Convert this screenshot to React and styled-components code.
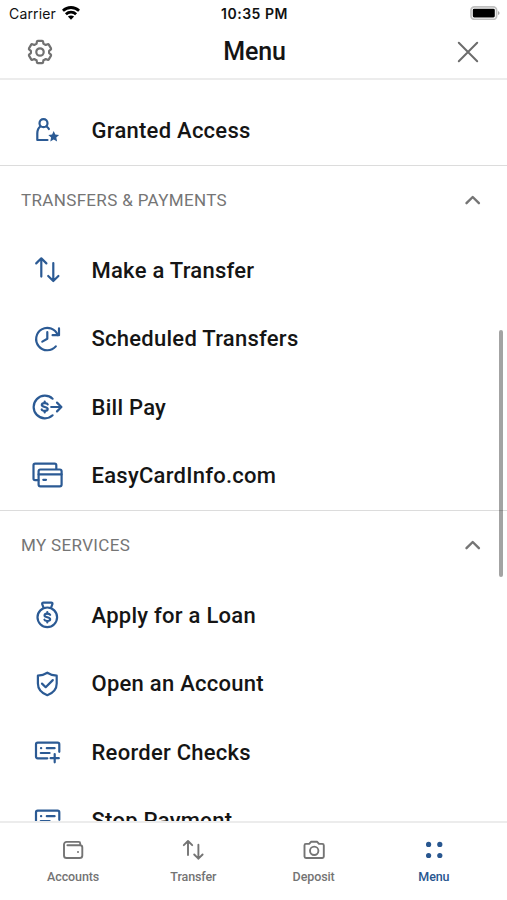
import React from "react";
import styled, { createGlobalStyle } from "styled-components";

const GlobalStyle = createGlobalStyle`
  * {
    box-sizing: border-box;
  }
  body {
    margin: 0;
    background: #fff;
    font-family: Roboto, "Liberation Sans", sans-serif;
  }
`;

const Screen = styled.div`
  display: flex;
  flex-direction: column;
  position: relative;
  width: 507px;
  height: 900px;
  overflow: hidden;
  background: #fff;
`;

const StatusBar = styled.div`
  display: grid;
  grid-template-columns: 1fr auto 1fr;
  align-items: center;
  height: 26px;
  padding: 0 7px 0 9px;
  font-family: Inter, sans-serif;
  font-size: 14px;
  color: #111;
`;

const Carrier = styled.div`
  display: flex;
  align-items: center;
  gap: 6px;
  letter-spacing: 0.15px;
`;

const Clock = styled.div`
  font-weight: 600;
  letter-spacing: 0.5px;
`;

const Battery = styled.div`
  display: flex;
  justify-content: flex-end;
`;

const Header = styled.header`
  display: flex;
  align-items: center;
  justify-content: space-between;
  height: 54px;
  padding: 0 26px 1px;
  border-bottom: 2px solid #ececec;
`;

const Title = styled.h1`
  margin: 0;
  font-size: 25px;
  font-weight: 500;
  letter-spacing: -0.2px;
  color: #141414;
`;

const IconButton = styled.button`
  display: flex;
  padding: 0;
  border: 0;
  background: none;
`;

const Icon = styled.svg`
  display: block;
  flex: none;
  width: ${props => props.$size}px;
  height: ${props => props.$size}px;
  fill: none;
  stroke: ${props => props.$color || "currentColor"};
  stroke-width: ${props => props.$stroke || 2.2};
  stroke-linecap: round;
  stroke-linejoin: round;
  .solid {
    fill: currentColor;
    stroke: none;
  }
`;

const List = styled.main`
  flex: 1;
  min-height: 0;
  padding-top: 16.3px;
  overflow: hidden;
`;

const Section = styled.section`
  border-top: 1px solid #dcdcdc;
`;

const SectionHeader = styled.div`
  display: flex;
  align-items: center;
  justify-content: space-between;
  height: 70.4px;
  padding: 0 24px 1.4px 21px;
  font-size: 17px;
  letter-spacing: 0.34px;
  color: #757575;
`;

const Row = styled.div`
  display: flex;
  align-items: center;
  gap: 28.5px;
  height: 68.4px;
  padding-left: 31px;
  color: #2b5a94;
`;

const Label = styled.span`
  font-size: 22px;
  font-weight: 500;
  letter-spacing: 0.26px;
  color: #151515;
`;

const ScrollThumb = styled.div`
  position: absolute;
  top: 330px;
  right: 4px;
  width: 4px;
  height: 247px;
  border-radius: 2px;
  background: rgba(0, 0, 0, 0.36);
`;

const TabBar = styled.nav`
  display: grid;
  grid-template-columns: repeat(4, 1fr);
  height: 79px;
  padding: 15px 13px 0;
  border-top: 2px solid #ececec;
  background: #fff;
`;

const Tab = styled.div`
  display: flex;
  flex-direction: column;
  align-items: center;
  gap: 7px;
  font-size: 12.5px;
  line-height: 16px;
  font-weight: 500;
  letter-spacing: -0.1px;
  color: ${props => (props.$active ? "#28568f" : "#747474")};
`;

const dollar = (
  <>
    <path d="M3 -2.6C2.4 -4.1 -2.9 -4.5 -2.9 -1.9C-2.9 0.4 3 -0.4 3 2C3 4.5 -2.5 4.1 -3 2.5" />
    <path d="M0 -5.4V-4M0 4V5.4" />
  </>
);

const icons = {
  access: (
    <>
      <circle cx="12.5" cy="9.2" r="4" />
      <path d="M9.5 12.4C7.2 14 6.3 16.6 6.3 19.5V26H16.5M15.4 12.4C16.6 13.2 17.4 14 17.9 15" />
      <path
        className="solid"
        d="M22.7 17.1L24.3 20.6L28.1 21L25.3 23.6L26.1 27.4L22.7 25.5L19.3 27.4L20.1 23.6L17.3 21L21.1 20.6Z"
      />
    </>
  ),
  transfer: <path d="M10.3 22.6V4.8M5.2 9.4L10.3 4.3L15.4 9.4M22.3 9V26.8M17.2 22L22.3 27L27.4 22" />,
  scheduled: (
    <>
      <path d="M24.8 23.4A11.2 11.2 0 1 1 26.8 12" />
      <path d="M28 5.4V12.2H21.6M16.3 9.2V15.7L11.3 18.6" />
    </>
  ),
  billPay: (
    <>
      <path d="M21.6 7.7A11.3 11.3 0 1 0 21.6 24.3" />
      <path d="M20.2 16H30.2M26 11.6L30.4 16L26 20.4" />
      <g transform="translate(13.7 16)">{dollar}</g>
    </>
  ),
  cards: (
    <>
      <path d="M25.3 10V6.2Q25.3 4.6 23.7 4.6H4.1Q2.5 4.6 2.5 6.2V19.6Q2.5 21.2 4.1 21.2H7.4" />
      <rect x="7.6" y="10.5" width="23" height="16.8" rx="1.8" />
      <path d="M7.6 15.4H30.6M12.3 20.8H15" />
    </>
  ),
  loan: (
    <>
      <circle cx="16.3" cy="18.3" r="9.8" />
      <path d="M12.6 8.8L11.2 5.2Q10.9 3.6 12.5 3.6H20.2Q21.8 3.6 21.4 5.2L20 8.8" />
      <g transform="translate(16.3 18.3) scale(0.96)">{dollar}</g>
    </>
  ),
  shield: (
    <>
      <path d="M16.3 4.7C13.5 6.5 10.3 7.4 6.9 7.7V15.5C6.9 21.5 11 25.2 16.3 27.2C21.6 25.2 25.7 21.5 25.7 15.5V7.7C22.3 7.4 19.1 6.5 16.3 4.7Z" />
      <path d="M11 15.6L14.7 19.2L21.8 12.1" />
    </>
  ),
  checks: (
    <>
      <path d="M16.3 22.3H6.7Q5 22.3 5 20.6V8.4Q5 6.7 6.7 6.7H26.6Q28.3 6.7 28.3 8.4V15.8" />
      <path d="M15.8 12.2H23.6M9.8 17H18.6M10 12.2H10.2M23.7 18.1V26.3M19.6 22.2H27.8" />
    </>
  ),
  wallet: (
    <>
      <path d="M19.2 6.7V5.4Q19.2 3.9 17.7 3.9H5.6A2.6 2.6 0 0 0 3 6.5V17.4Q3 20 5.6 20H18.5Q21.3 20 21.3 17.4V9.6Q21.3 7.3 19 7.3H6.4" />
      <circle className="solid" cx="17" cy="14" r="1" />
    </>
  ),
  tabTransfer: <path d="M7 17V3M2.8 7.2L7 3L11.2 7.2M17.4 6.7V20.7M13.2 16.5L17.4 20.7L21.6 16.5" />,
  camera: (
    <>
      <path d="M3.9 5.9H7.2L9 3.8H15.2L17 5.9H20.3Q21.8 5.9 21.8 7.4V18.6Q21.8 20 20.3 20H4Q2.5 20 2.5 18.6V7.4Q2.5 5.9 3.9 5.9Z" />
      <circle cx="12.2" cy="12.8" r="4.2" />
    </>
  ),
  dots: (
    <g className="solid">
      <circle cx="6.6" cy="6.4" r="2.6" />
      <circle cx="17.8" cy="6.4" r="2.6" />
      <circle cx="6.6" cy="17.5" r="2.6" />
      <circle cx="17.8" cy="17.5" r="2.6" />
    </g>
  )
};

const sections = [
  {
    title: "TRANSFERS & PAYMENTS",
    items: [
      { icon: "transfer", label: "Make a Transfer" },
      { icon: "scheduled", label: "Scheduled Transfers" },
      { icon: "billPay", label: "Bill Pay" },
      { icon: "cards", label: "EasyCardInfo.com" }
    ]
  },
  {
    title: "MY SERVICES",
    items: [
      { icon: "loan", label: "Apply for a Loan" },
      { icon: "shield", label: "Open an Account" },
      { icon: "checks", label: "Reorder Checks" },
      { icon: "checks", label: "Stop Payment" }
    ]
  }
];

const tabs = [
  { icon: "wallet", label: "Accounts" },
  { icon: "tabTransfer", label: "Transfer" },
  { icon: "camera", label: "Deposit" },
  { icon: "dots", label: "Menu", active: true }
];

const MenuRow = ({ icon, label }) => (
  <Row>
    <Icon $size={32} viewBox="0 0 32 32">
      {icons[icon]}
    </Icon>
    <Label>{label}</Label>
  </Row>
);

const App = () => (
  <Screen>
    <GlobalStyle />
    <StatusBar>
      <Carrier>
        Carrier
        <svg width="18" height="14" viewBox="0 0 18 14" fill="none" stroke="#000" strokeWidth="2.8">
          <path d="M0.9 4.8C5.5 0.4 12.5 0.4 17.1 4.8" />
          <path d="M3.9 8.2C6.8 5.4 11.2 5.4 14.1 8.2" />
          <path d="M9 13.8L5.9 10.6C7.6 9 10.4 9 12.1 10.6Z" fill="#000" stroke="none" />
        </svg>
      </Carrier>
      <Clock>10:35 PM</Clock>
      <Battery>
        <svg width="30" height="14" viewBox="0 0 30 14">
          <rect x="1" y="0.9" width="25.6" height="12.4" rx="3.4" fill="#fff" stroke="#c0c0c0" strokeWidth="1.7" />
          <rect x="2.8" y="2.7" width="22" height="8.8" rx="1.4" fill="#000" />
          <path d="M28 4.9Q29.6 5.7 29.6 7T28 9.1Z" fill="#a8a8a8" />
        </svg>
      </Battery>
    </StatusBar>
    <Header>
      <IconButton aria-label="Settings">
        <Icon $size={28} $color="#717171" viewBox="0 0 28 28">
          <path d="M11.8 2.8H16.2Q17 2.8 17.1 3.6L17.4 5.7Q18.6 6.2 19.7 7L21.6 6.2Q22.4 5.9 22.8 6.6L25 10.4Q25.3 11.2 24.7 11.7L23.1 12.9V15.1L24.7 16.3Q25.3 16.8 25 17.6L22.8 21.4Q22.4 22.1 21.6 21.8L19.7 21Q18.6 21.8 17.4 22.3L17.1 24.4Q17 25.2 16.2 25.2H11.8Q11 25.2 10.9 24.4L10.6 22.3Q9.4 21.8 8.3 21L6.4 21.8Q5.6 22.1 5.2 21.4L3 17.6Q2.7 16.8 3.3 16.3L4.9 15.1V12.9L3.3 11.7Q2.7 11.2 3 10.4L5.2 6.6Q5.6 5.9 6.4 6.2L8.3 7Q9.4 6.2 10.6 5.7L10.9 3.6Q11 2.8 11.8 2.8Z" />
          <circle cx="14" cy="14" r="3.7" />
        </Icon>
      </IconButton>
      <Title>Menu</Title>
      <IconButton aria-label="Close">
        <Icon $size={26} $color="#6c6c6c" $stroke={2} viewBox="0 0 26 26">
          <path d="M3.8 3.8L22.2 22.2M22.2 3.8L3.8 22.2" />
        </Icon>
      </IconButton>
    </Header>
    <List>
      <MenuRow icon="access" label="Granted Access" />
      {sections.map(section => (
        <Section key={section.title}>
          <SectionHeader>
            {section.title}
            <Icon $size={20} $color="#757575" $stroke={2.4} viewBox="0 0 20 20">
              <path d="M3.5 13.2L9.7 7L15.9 13.2" />
            </Icon>
          </SectionHeader>
          {section.items.map(item => (
            <MenuRow key={item.label} icon={item.icon} label={item.label} />
          ))}
        </Section>
      ))}
    </List>
    <TabBar>
      {tabs.map(tab => (
        <Tab key={tab.label} $active={tab.active}>
          <Icon $size={24} $stroke={1.9} viewBox="0 0 24 24">
            {icons[tab.icon]}
          </Icon>
          {tab.label}
        </Tab>
      ))}
    </TabBar>
    <ScrollThumb />
  </Screen>
);

export default App;
